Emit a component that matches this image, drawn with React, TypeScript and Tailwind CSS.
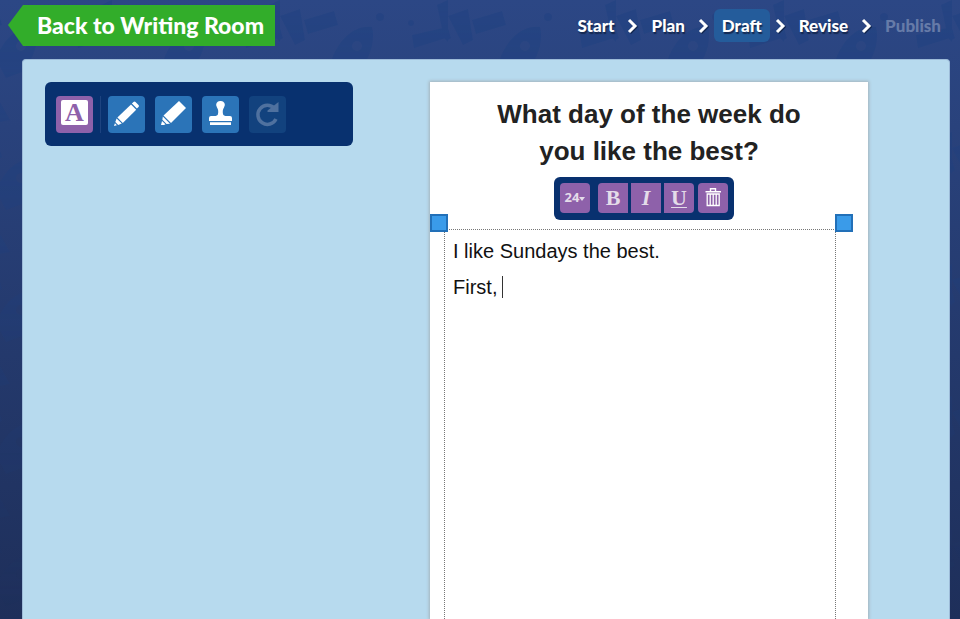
import React, { useState } from 'react';

interface Step {
  name: string;
  disabled?: boolean;
}

const steps: Step[] = [
  { name: 'Start' },
  { name: 'Plan' },
  { name: 'Draft' },
  { name: 'Revise' },
  { name: 'Publish', disabled: true },
];

// Faint satellites and rockets, fading out towards the bottom
const Backdrop: React.FC = () => (
  <svg className="absolute inset-0 w-full h-full mask-b-from-0%" aria-hidden="true">
    <defs>
      <pattern id="space" width="168" height="132" patternUnits="userSpaceOnUse" x="280" y="0">
        <g fill="#1c4080" opacity="0.45">
          <path d="M0 16 20 9 25 40 15 45ZM24 20 54 11 58 25 28 34ZM0 28 3 38 0 40Z" />
          <path d="M132 35 163 28 166 38 134 48ZM157 5 168 0 168 42 164 38Z" />
          <path fillRule="evenodd" d="M52 59C60 38 75 25 92 27 96 43 88 62 78 72L62 78ZM82 46a5 5 0 1 0-10 0 5 5 0 0 0 10 0Z" />
          <circle cx="100" cy="17" r="4" />
          <circle cx="131" cy="23" r="3" />
          <path d="M20 100 48 88 66 120 34 126ZM108 92 144 84 152 112 120 118Z" />
        </g>
      </pattern>
    </defs>
    <rect width="100%" height="100%" fill="url(#space)" />
  </svg>
);

const Header: React.FC = () => (
  <header className="relative flex items-start justify-between pl-2 pr-[11px]">
    <a href="#writing-room" className="relative mt-1 h-[42px] w-[267px] flex items-center pl-[29px]">
      <svg className="absolute inset-0 w-full h-full" viewBox="0 0 267 42" preserveAspectRatio="none" aria-hidden="true">
        <path d="M0 21 15 1H267V42H15Z" fill="#32ad2a" />
      </svg>
      <span className="relative whitespace-nowrap font-['Lato',sans-serif] font-black text-[23px] leading-8 text-white">
        Back to Writing Room
      </span>
    </a>
    <nav aria-label="Writing steps" className="mt-[9px] flex items-center font-['Lato',sans-serif] text-[17px] font-black text-white">
      {steps.map((step, i) => (
        <React.Fragment key={step.name}>
          {i > 0 && (
            <svg className="w-[21px] h-4" viewBox="0 0 21 16" fill="none" aria-hidden="true">
              <path d="m8 3 6 6-6 6" stroke="#142850" strokeWidth="3" />
              <path d="m7 2 6 6-6 6" stroke="#fff" strokeWidth="3" />
            </svg>
          )}
          <button
            type="button"
            disabled={step.disabled}
            aria-current={step.name === 'Draft' ? 'step' : undefined}
            className={`h-[33px] px-2 rounded-md ${step.name === 'Draft' ? 'bg-[#245c9b]' : ''} ${
              step.disabled ? 'text-[#667ba8]' : '[text-shadow:1px_2px_1px_#142850]'
            }`}
          >
            {step.name}
          </button>
        </React.Fragment>
      ))}
    </nav>
  </header>
);

const toolButton = 'w-[37px] h-[37px] rounded flex items-center justify-center bg-[#2b74b8] text-white';

const Toolbox: React.FC = () => (
  <div role="toolbar" aria-label="Drawing tools" className="flex items-start w-[308px] h-16 pt-[14px] pl-[11px] rounded-md bg-[#08316f]">
    <button type="button" aria-label="Text" className="w-[37px] h-[37px] rounded bg-[#8e61aa] flex items-start justify-center pt-1">
      <span className="w-[27px] h-[25px] rounded-xs bg-white text-[#8e61aa] font-['Liberation_Serif',serif] font-bold text-[26px] leading-[25px]">A</span>
    </button>
    <span className="w-px h-[37px] mx-[7px] bg-[#1d4380]" />
    <div className="flex gap-[10px]">
      <button type="button" aria-label="Pencil" className={toolButton}>
        <svg className="w-[37px] h-[37px]" viewBox="0 0 37 37" fill="currentColor" aria-hidden="true">
          <path d="M25.500 6q1-1 2 0l3 3q1 1 0 2l-1.600 1.600-5-5Z" />
          <path d="m23 8.500 5.200 5.200L14.800 27l-5.400-5.400Z" />
          <path d="m8.600 22.400 5.200 5.200-3.600 1.300-2.900-2.900ZM6.900 27.200l2 2-2.900.800Z" />
        </svg>
      </button>
      <button type="button" aria-label="Highlighter" className={toolButton}>
        <svg className="w-[37px] h-[37px]" viewBox="0 0 37 37" fill="currentColor" aria-hidden="true">
          <path d="m24 5 7 7L16 27l-7.500-7.500Z" />
          <path d="m7.800 20.500 7.200 7.200-3.400.300-4.200-4.200ZM7 25l3.500 3.200-1.500.800H6Z" />
        </svg>
      </button>
      <button type="button" aria-label="Stamp" className={toolButton}>
        <svg className="w-[37px] h-[37px]" viewBox="0 0 37 37" fill="currentColor" aria-hidden="true">
          <path d="M18.500 5a4 4 0 0 1 3.500 6.500c-1.300 2-1.500 4-1 6.500.3 1.500 1.500 2 4 2h3q2 0 2 2v3H7v-3q0-2 2-2h3c2.500 0 3.700-.5 4-2 .5-2.500.3-4.500-1-6.500A4 4 0 0 1 18.500 5ZM8 26.300h21V29H8Z" />
        </svg>
      </button>
      <button type="button" disabled aria-label="Redo" className="w-[37px] h-[37px] rounded bg-[#12427e] text-[#4f719f]">
        <svg className="w-[37px] h-[37px]" viewBox="0 0 37 37" fill="none" aria-hidden="true">
          <path d="M25.500 12.500A9.500 9.500 0 1 0 27 23" stroke="currentColor" strokeWidth="3.500" />
          <path d="M29.500 6v10h-11v-1.500Z" fill="currentColor" />
        </svg>
      </button>
    </div>
  </div>
);

const formatButton = "w-[30px] h-[30px] bg-[#8e61aa] text-[#e4dce9] font-['Liberation_Serif',serif] font-bold text-[22px] leading-[30px]";

const FormatBar: React.FC = () => (
  <div role="toolbar" aria-label="Text format" className="w-[180px] h-[43px] p-[6px] flex rounded-md bg-[#08316f]">
    <button
      type="button"
      aria-label="Font size"
      className="w-[30px] h-[30px] mr-2 rounded bg-[#8e61aa] text-[#e4dce9] flex items-center justify-center font-['Open_Sans',sans-serif] font-bold text-[13px]"
    >
      24
      <svg className="w-[6px] h-[4px] mt-px" viewBox="0 0 6 4" fill="currentColor" aria-hidden="true">
        <path d="M0 0h6L3 4Z" />
      </svg>
    </button>
    <div className="flex gap-[3px]">
      <button type="button" aria-label="Bold" className={`${formatButton} rounded-l`}>B</button>
      <button type="button" aria-label="Italic" className={`${formatButton} italic`}>I</button>
      <button type="button" aria-label="Underline" className={`${formatButton} rounded-r underline decoration-1 underline-offset-2`}>U</button>
    </div>
    <button type="button" aria-label="Delete" className="w-[30px] h-[30px] ml-1 rounded bg-[#8e61aa] text-white">
      <svg className="w-[30px] h-[30px]" viewBox="0 0 30 30" fill="none" stroke="currentColor" aria-hidden="true">
        <path d="M12.500 8V5.700h5V8M7.500 8.700h15.500" strokeWidth="1.400" />
        <path d="M9.200 11h12v11.500h-12ZM12.200 11v11.500M15.200 11v11.500M18.200 11v11.500" strokeWidth="1.300" />
      </svg>
    </button>
  </div>
);

const handle = 'absolute -top-4 w-[18px] h-[18px] bg-[#3a9be9] border-2 border-[#2270b8]';

const Paper: React.FC = () => {
  const [draft, setDraft] = useState('I like Sundays the best.\nFirst, ');

  return (
    <section className="w-[438px] flex flex-col bg-white pt-[14px] pl-[14px] pr-8 shadow-[0_0_3px_1px_#a3b3bb]">
      <h1 className="-mr-[18px] px-10 text-center font-bold text-[26px] leading-[37px] text-[#222]">
        What day of the week do you like the best?
      </h1>
      <div className="mt-[7px] ml-2 flex justify-center">
        <FormatBar />
      </div>
      <div className="relative mt-[9px] grow flex border border-b-0 border-dotted border-[#777]">
        <span className={`${handle} -left-[15px]`} />
        <span className={`${handle} -right-[18px]`} />
        <textarea
          aria-label="Draft"
          value={draft}
          onChange={(e) => setDraft(e.target.value)}
          className="grow resize-none px-2 pt-[3px] text-xl leading-9 text-[#111] caret-transparent outline-none"
        />
        <span className="absolute left-[57px] top-[46px] w-px h-[22px] bg-[#333]" />
      </div>
    </section>
  );
};

const App: React.FC = () => (
  <div className="relative min-h-screen flex flex-col overflow-hidden bg-linear-to-b from-[#2c4785] to-[#1e2f5a] font-['Liberation_Sans',sans-serif]">
    <Backdrop />
    <Header />
    <main className="relative mt-[13px] ml-[22px] mr-[10px] grow flex justify-between pt-[22px] pl-[22px] pr-[81px] rounded-t-sm border border-b-0 border-[#9dbbd8] bg-[#b7daee]">
      <Toolbox />
      <Paper />
    </main>
  </div>
);

export default App;
